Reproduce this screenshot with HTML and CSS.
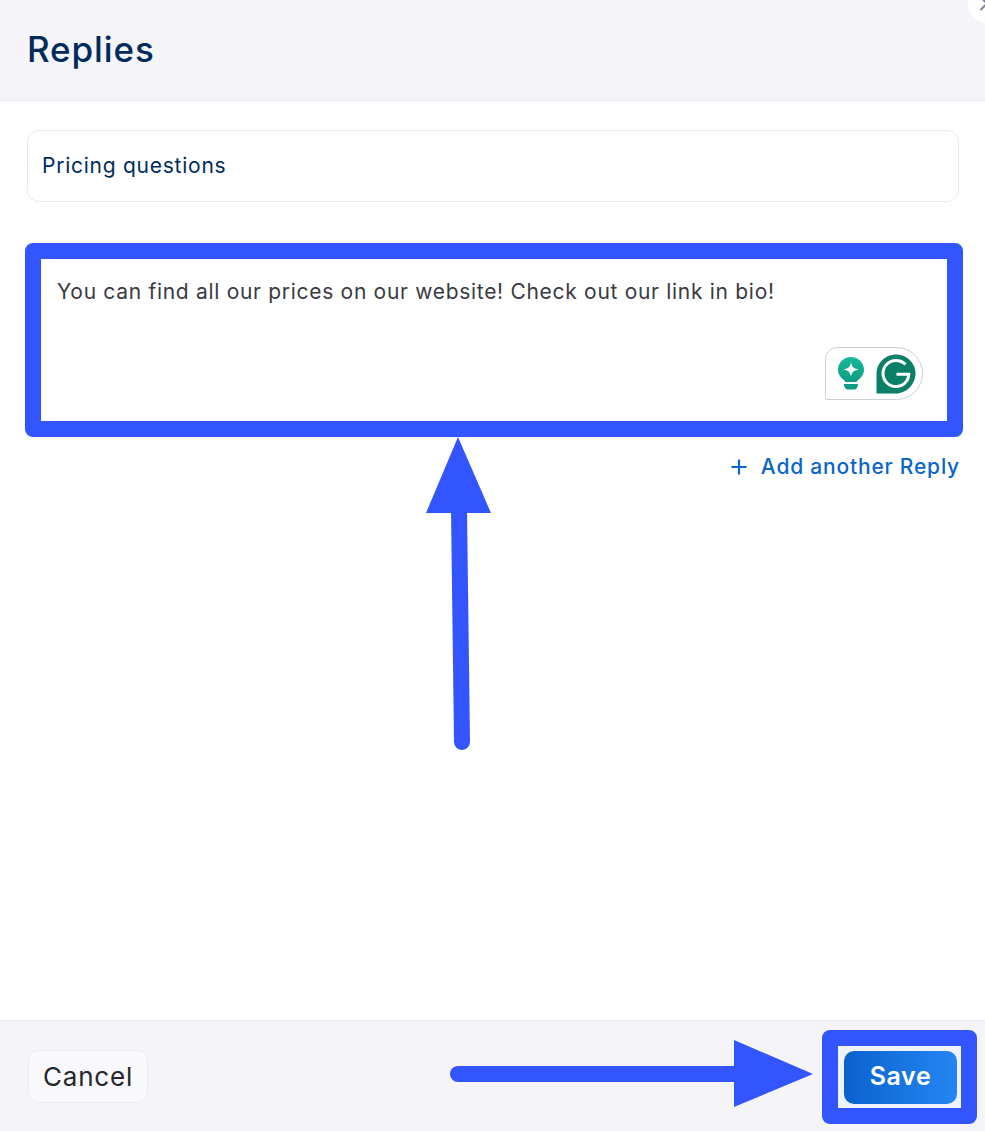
FILE: index.html
```html
<!DOCTYPE html>
<html lang="en">
<head>
    <meta charset="UTF-8">
    <meta name="viewport" content="width=device-width, initial-scale=1.0">
    <title>Replies</title>
    <link rel="stylesheet" href="styles.css">
</head>
<body>
    <div class="Modal">
        <div class="Modal-header">
            <h1 class="Modal-title">Replies</h1>
            <button type="button" class="Modal-close" aria-label="Close">
                <svg width="16" height="16" viewBox="0 0 16 16">
                    <path d="M1.500 1L14.500 14M14.500 1L1.500 14" fill="none" stroke="#7d8596" stroke-width="2"/>
                </svg>
            </button>
        </div>

        <div class="Modal-body">
            <div class="Reply-name">Pricing questions</div>
            <div class="Reply-frame">
                <div class="Reply-text">You can find all our prices on our website! Check out our link in bio!</div>
                <div class="Grammarly">
                    <svg width="26" height="33" viewBox="0 0 26 33">
                        <defs>
                            <linearGradient id="bulbFill" x1="0" y1="0" x2="0" y2="1">
                                <stop offset="0" stop-color="#17b89b"/>
                                <stop offset="1" stop-color="#0e9d84"/>
                            </linearGradient>
                        </defs>
                        <path d="M13 0C5.800 0 0 5.700 0 12.800C0 17.300 2.600 20.500 5.800 23C6.700 23.700 7 24.300 7.200 25H18.800C19 24.300 19.300 23.700 20.200 23C23.400 20.500 26 17.300 26 12.800C26 5.700 20.200 0 13 0Z" fill="url(#bulbFill)"/>
                        <path d="M13 5C13.800 9.800 15.400 11.500 20.500 12.500C15.400 13.500 13.800 15.200 13 20C12.200 15.200 10.600 13.500 5.500 12.500C10.600 11.500 12.200 9.800 13 5Z" fill="#ffffff"/>
                        <path d="M6 27H20C20 30.500 18 32.500 16 32.500H10C8 32.500 6 30.500 6 27Z" fill="#0e9d84"/>
                    </svg>
                    <svg width="40" height="40" viewBox="0 0 40 40">
                        <path d="M20 0.500C30.500 0.500 39.500 9 39.500 19.500C39.500 30 30.500 39.500 20 39.500H0.500V19.500C0.500 9 9.500 0.500 20 0.500Z" fill="#0b8068"/>
                        <path d="M29.500 10.500C27 8 23.700 6.500 20 6.500C12.800 6.500 7 12.300 7 19.500C7 26.700 12.800 32.500 20 32.500C27 32.500 32.500 27.300 32.800 20.300H20.500" fill="none" stroke="#ffffff" stroke-width="3"/>
                    </svg>
                </div>
            </div>
            <div class="Reply-actions">
                <a class="Reply-add" href="#">
                    <svg width="18" height="18" viewBox="0 0 18 18">
                        <path d="M9 1.500V16.500M1.500 9H16.500" fill="none" stroke="#0a66c8" stroke-width="2.200"/>
                    </svg>
                    Add another Reply
                </a>
            </div>
        </div>

        <div class="Modal-footer">
            <button type="button" class="Btn Btn--cancel">Cancel</button>
            <div class="Save-frame">
                <button type="button" class="Btn Btn--save">Save</button>
            </div>
        </div>

        <!-- annotation arrows drawn on top of the screenshot -->
        <svg class="Arrows" width="985" height="1131" viewBox="0 0 985 1131">
            <path d="M459 510L462 742" fill="none" stroke="#3355ff" stroke-width="16" stroke-linecap="round"/>
            <polygon points="458,437 491,513 426,513" fill="#3355ff"/>
            <path d="M458 1074H740" fill="none" stroke="#3355ff" stroke-width="16" stroke-linecap="round"/>
            <polygon points="734,1040 813,1074 734,1107" fill="#3355ff"/>
        </svg>
    </div>
</body>
</html>
```

FILE: styles.css
```css
* {
    margin: 0;
    padding: 0;
    box-sizing: border-box;
}

html, body {
    height: 100%;
    font-family: 'Inter', 'Noto Sans', sans-serif;
    background: #ffffff;
    overflow: hidden;
}

.Modal {
    position: relative;
    display: flex;
    flex-direction: column;
    height: 100%;
    overflow: hidden;
}

.Modal-header {
    height: 101px;
    flex-shrink: 0;
    display: flex;
    align-items: center;
    padding: 0 27px 2px;
    background: #f4f4f9;
    border-bottom: 1px solid #e9e9ef;
}

.Modal-title {
    font-size: 35px;
    font-weight: 500;
    color: #002b5c;
    letter-spacing: 0.9px;
}

.Modal-close {
    position: absolute;
    top: -15px;
    right: -21px;
    width: 38px;
    height: 38px;
    display: flex;
    align-items: center;
    justify-content: center;
    border: none;
    border-radius: 50%;
    background: #ffffff;
}

.Modal-body {
    flex-grow: 1;
    display: flex;
    flex-direction: column;
    padding: 29px 26px 0 27px;
}

.Reply-name {
    height: 72px;
    display: flex;
    align-items: center;
    padding: 0 14px 1px;
    font-size: 21px;
    letter-spacing: 0.75px;
    color: #002b5c;
    background: #ffffff;
    border: 1px solid #e9e9ef;
    border-radius: 12px;
}

.Reply-frame {
    position: relative;
    height: 194px;
    margin: 41px -4px 0 -2px;
    padding: 17px 16px 16px;
    background: #ffffff;
    border: 16px solid #3355ff;
    border-radius: 8px;
}

.Reply-text {
    font-size: 21px;
    line-height: 32px;
    letter-spacing: 0.7px;
    color: #3a3a42;
}

.Grammarly {
    position: absolute;
    right: 24px;
    bottom: 21px;
    width: 98px;
    height: 53px;
    display: flex;
    align-items: center;
    gap: 12px;
    padding-left: 12px;
    background: #ffffff;
    border: 1px solid #ccd2d4;
    border-radius: 12px 27px 27px 2px;
}

.Reply-actions {
    display: flex;
    justify-content: flex-end;
    margin-top: 14px;
}

.Reply-add {
    display: flex;
    align-items: center;
    gap: 13px;
    margin-right: -1px;
    font-size: 21px;
    font-weight: 500;
    line-height: 32px;
    letter-spacing: 0.8px;
    color: #0a66c8;
    text-decoration: none;
}

.Modal-footer {
    height: 111px;
    flex-shrink: 0;
    display: flex;
    align-items: center;
    justify-content: space-between;
    padding: 0 8px 0 28px;
    background: #f4f4f9;
    border-top: 1px solid #e9e9ef;
}

.Btn {
    height: 53px;
    font-family: inherit;
    border-radius: 10px;
    cursor: pointer;
}

.Btn--cancel {
    width: 120px;
    font-size: 26px;
    letter-spacing: 0.8px;
    color: #26262e;
    background: #f9f9fc;
    border: 1px solid #ebebf0;
}

.Btn--save {
    width: 113px;
    margin-left: 2px;
    padding-bottom: 2px;
    font-size: 25px;
    font-weight: 600;
    letter-spacing: 0.6px;
    color: #ffffff;
    background: linear-gradient(to right, #0a62cf, #2486f3);
    border: none;
}

.Save-frame {
    display: flex;
    align-items: center;
    justify-content: center;
    width: 155px;
    height: 94px;
    margin-top: 2px;
    background: #f0f3fb;
    border: 16px solid #3355ff;
    border-radius: 8px;
}

.Arrows {
    position: absolute;
    top: 0;
    left: 0;
    pointer-events: none;
}
```
